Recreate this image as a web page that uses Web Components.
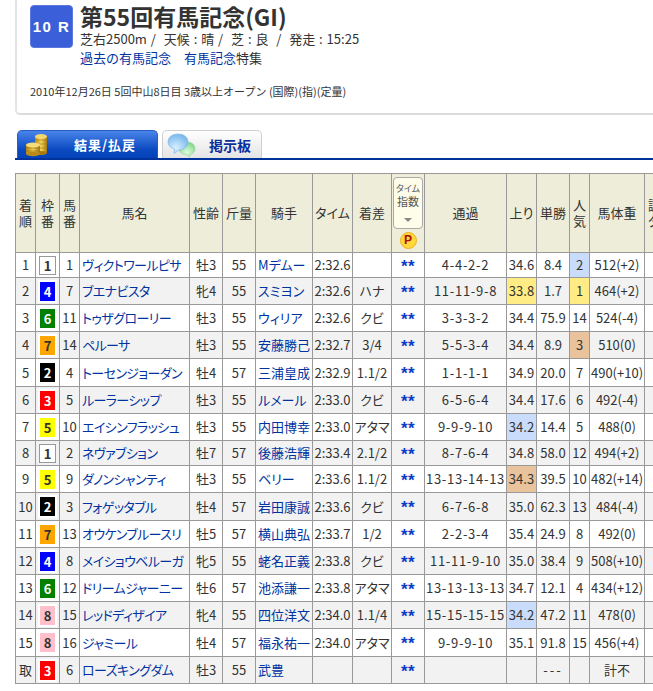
<!DOCTYPE html>
<html lang="ja">
<head>
<meta charset="utf-8">
<title>第55回有馬記念(GI)</title>
<style>
  html, body { margin: 0; overflow: hidden; background: #fff; }
  body { font-family: "Noto Sans CJK JP", "Liberation Sans", sans-serif; color: #333; width: 653px; height: 691px; }
  a { color: #00339f; text-decoration: none; }
</style>
</head>
<body>
<race-card>
  <span slot="number">10 R</span>
  <span slot="title">第55回有馬記念(GI)</span>
  <span slot="info">芝右2500m / &nbsp;天候 : 晴 / &nbsp;芝 : 良 &nbsp;/ &nbsp;発走 : 15:25</span>
  <span slot="links"><a href="#">過去の有馬記念</a>　<a href="#">有馬記念</a>特集</span>
  <span slot="meta">2010年12月26日 5回中山8日目 3歳以上オープン (国際)(指)(定量)</span>
</race-card>
<race-tabs></race-tabs>
<result-table></result-table>

<script>
const linkColor = "#00339f";

const cardTemplate = document.createElement("template");
cardTemplate.innerHTML = `
  <style>
    :host { display: block; margin-left: 15px; width: 638px; height: 115px; box-sizing: border-box;
      border-left: 2px solid #e4e4e4; border-bottom: 2px solid #dcdcdc; border-bottom-left-radius: 5px; padding: 5px 0 0 13px; }
    .top { display: flex; gap: 7px; }
    .num { width: 43px; height: 43px; box-sizing: border-box; background: #3b5fd9; border: 1px solid #5a78dd; border-radius: 4px;
      color: #fff; font: bold 15px/41px "Liberation Sans", sans-serif; letter-spacing: 1.5px; text-align: center; flex: none; }
    .title { font-size: 23px; font-weight: 700; line-height: 23px; color: #333; white-space: nowrap; }
    .info { font-size: 13px; line-height: 18px; margin-top: 2px; white-space: nowrap; word-spacing: 1px; }
    .links { font-size: 13px; line-height: 18px; margin-top: 1px; white-space: nowrap; }
    .meta { font-size: 11px; line-height: 14px; margin-top: 17px; white-space: nowrap; }
  </style>
  <div class="top">
    <div class="num"><slot name="number"></slot></div>
    <div>
      <div class="title"><slot name="title"></slot></div>
      <div class="info"><slot name="info"></slot></div>
      <div class="links"><slot name="links"></slot></div>
    </div>
  </div>
  <div class="meta"><slot name="meta"></slot></div>
`;

class RaceCard extends HTMLElement {
  constructor() {
    super();
    this.attachShadow({ mode: "open" });
    this.shadowRoot.appendChild(cardTemplate.content.cloneNode(true));
  }
}
customElements.define("race-card", RaceCard);

const tabsTemplate = document.createElement("template");
tabsTemplate.innerHTML = `
  <style>
    :host { display: block; margin: 15px 0 0 15px; height: 30px; box-sizing: border-box; border-bottom: 2px solid #003399; }
    .row { display: flex; gap: 4px; height: 28px; padding-left: 2px; }
    .tab { box-sizing: border-box; height: 28px; border-radius: 5px 5px 0 0; display: flex; align-items: center; font-size: 13px; font-weight: 700; position: relative; white-space: nowrap; }
    .on { width: 141px; background: linear-gradient(#4a84ea, #0a49c0 70%, #0342b8); border: 1px solid #2a5cc0; border-bottom: 0; color: #fff; padding-left: 56px; letter-spacing: 1px; }
    .off { width: 100px; background: linear-gradient(#fff, #e4e4e4); border: 1px solid #cfcfcf; border-bottom: 0; color: #0b2f9c; padding-left: 46px; font-size: 14px; }
    svg { position: absolute; }
  </style>
  <div class="row">
    <div class="tab on">
      <svg style="left:7px;top:2px" width="24" height="24" viewBox="0 0 24 24">
        <defs><linearGradient id="g" x1="0" x2="1"><stop offset="0" stop-color="#b8860f"/><stop offset=".5" stop-color="#f6d45a"/><stop offset="1" stop-color="#a87a10"/></linearGradient></defs>
        <rect x="10" y="3" width="12" height="17" fill="url(#g)"/>
        <path d="M10 7h12M10 11h12M10 15h12" stroke="#a67c14" stroke-width=".6"/>
        <ellipse cx="16" cy="3.500" rx="6" ry="2.500" fill="#f3d670"/>
        <ellipse cx="16" cy="20" rx="6" ry="2" fill="#a87a10"/>
        <rect x="1" y="12" width="14" height="9" fill="url(#g)"/>
        <path d="M1 15h14M1 18h14" stroke="#8f6a10" stroke-width=".7"/>
        <ellipse cx="8" cy="12" rx="7" ry="2.500" fill="#f6dc78"/>
        <ellipse cx="8" cy="21" rx="7" ry="2.200" fill="#b88a18"/>
      </svg>
      結果/払戻
    </div>
    <div class="tab off">
      <svg style="left:4px;top:2px" width="32" height="25" viewBox="0 0 32 25">
        <defs>
          <radialGradient id="b" cx=".4" cy=".7" r=".8"><stop offset="0" stop-color="#d8f0ff"/><stop offset="1" stop-color="#6ab0ea"/></radialGradient>
          <radialGradient id="c" cx=".5" cy=".7" r=".8"><stop offset="0" stop-color="#e0fbe0"/><stop offset="1" stop-color="#6fd07a"/></radialGradient>
        </defs>
        <path d="M20 9c5 0 8 3 8 6.500s-2.500 5.500-5 6l-.5 2.500-3.500-2.500c-4 0-7-2.500-7-6s3-6.500 8-6.500z" fill="url(#c)" stroke="#8ad494" stroke-width=".6"/>
        <path d="M11 1c6 0 10 3.500 10 8s-4 8-9 8l-5 3.500 .5-4.500C3.500 15 1 12.500 1 9c0-4.500 4-8 10-8z" fill="url(#b)" stroke="#7cb6e6" stroke-width=".6"/>
      </svg>
      掲示板
    </div>
  </div>
`;

class RaceTabs extends HTMLElement {
  constructor() {
    super();
    this.attachShadow({ mode: "open" });
    this.shadowRoot.appendChild(tabsTemplate.content.cloneNode(true));
  }
}
customElements.define("race-tabs", RaceTabs);

const wakuColors = {
  1: ["#fff", "#333"], 2: ["#000", "#fff"], 3: ["#f00", "#fff"], 4: ["#00f", "#fff"],
  5: ["#ff0", "#333"], 6: ["#008000", "#fff"], 7: ["#ffa500", "#333"], 8: ["#ffc0cb", "#333"],
};

class WakuBadge extends HTMLElement {
  constructor() {
    super();
    this.attachShadow({ mode: "open" });
    const n = this.getAttribute("n");
    const [bg, fg] = wakuColors[n];
    const edge = n === "1" ? "border: 1px solid #999; width: 15px; height: 17px; line-height: 17px;" : "";
    this.shadowRoot.innerHTML = `
      <style>
        :host { display: inline-block; vertical-align: middle; padding: 2px; background: ${n === "1" ? "transparent" : "#fff"}; line-height: 0; }
        div { width: 15px; height: 19px; line-height: 19px; background: ${bg}; color: ${fg}; font-size: 13px; font-weight: 700; text-align: center; ${edge} }
      </style>
      <div>${n}</div>`;
  }
}
customElements.define("waku-badge", WakuBadge);

const widths = [20, 24, 20, 110, 33, 33, 57, 40, 39, 33, 82, 30, 33, 20, 55, 10];
const heads = ["着<br>順", "枠<br>番", "馬<br>番", "馬名", "性齢", "斤量", "騎手", "タイム", "着差", "", "通過", "上り", "単勝", "人<br>気", "馬体重", "調教<br>タイム"];
const hi = { blue: "#c9dcfc", yellow: "#ffec84", orange: "#e9c39b" };

// 着順 枠 馬番 馬名 性齢 斤量 騎手 タイム 着差 通過 上り 単勝 人気 馬体重 行高
const rows = [
  ["1", 1, 1, "ヴィクトワールピサ", "牡3", 55, "Mデムー", "2:32.6", "", "4-4-2-2", "34.6", "8.4", "2", "512(+2)", 25, {pop: "blue"}],
  ["2", 4, 7, "ブエナビスタ", "牝4", 55, "スミヨン", "2:32.6", "ハナ", "11-11-9-8", "33.8", "1.7", "1", "464(+2)", 27, {up: "yellow", pop: "yellow"}],
  ["3", 6, 11, "トゥザグローリー", "牡3", 55, "ウィリア", "2:32.6", "クビ", "3-3-3-2", "34.4", "75.9", "14", "524(-4)", 27],
  ["4", 7, 14, "ペルーサ", "牡3", 55, "安藤勝己", "2:32.7", "3/4", "5-5-3-4", "34.4", "8.9", "3", "510(0)", 27, {pop: "orange"}],
  ["5", 2, 4, "トーセンジョーダン", "牡4", 57, "三浦皇成", "2:32.9", "1.1/2", "1-1-1-1", "34.9", "20.0", "7", "490(+10)", 28],
  ["6", 3, 5, "ルーラーシップ", "牡3", 55, "ルメール", "2:33.0", "クビ", "6-5-6-4", "34.4", "17.6", "6", "492(-4)", 27],
  ["7", 5, 10, "エイシンフラッシュ", "牡3", 55, "内田博幸", "2:33.0", "アタマ", "9-9-9-10", "34.2", "14.4", "5", "488(0)", 27, {up: "blue"}],
  ["8", 1, 2, "ネヴァブション", "牡7", 57, "後藤浩輝", "2:33.4", "2.1/2", "8-7-6-4", "34.8", "58.0", "12", "494(+2)", 25],
  ["9", 5, 9, "ダノンシャンティ", "牡3", 55, "ベリー", "2:33.6", "1.1/2", "13-13-14-13", "34.3", "39.5", "10", "482(+14)", 27, {up: "orange"}],
  ["10", 2, 3, "フォゲッタブル", "牡4", 57, "岩田康誠", "2:33.6", "クビ", "6-7-6-8", "35.0", "62.3", "13", "484(-4)", 28],
  ["11", 7, 13, "オウケンブルースリ", "牡5", 57, "横山典弘", "2:33.7", "1/2", "2-2-3-4", "35.4", "24.9", "8", "492(0)", 27],
  ["12", 4, 8, "メイショウベルーガ", "牝5", 55, "蛯名正義", "2:33.8", "クビ", "11-11-9-10", "35.0", "38.4", "9", "508(+10)", 27],
  ["13", 6, 12, "ドリームジャーニー", "牡6", 57, "池添謙一", "2:33.8", "アタマ", "13-13-13-13", "34.7", "12.1", "4", "434(+12)", 27],
  ["14", 8, 15, "レッドディザイア", "牝4", 55, "四位洋文", "2:34.0", "1.1/4", "15-15-15-15", "34.2", "47.2", "11", "478(0)", 27, {up: "blue"}],
  ["15", 8, 16, "ジャミール", "牡4", 57, "福永祐一", "2:34.0", "アタマ", "9-9-9-10", "35.1", "91.8", "15", "456(+4)", 28],
  ["取", 3, 6, "ローズキングダム", "牡3", 55, "武豊", "", "", "", "", "---", "", "計不", 27],
];

const tableStyle = `
  <style>
    :host { display: block; margin: 13px 0 0 15px; width: 638px; }
    table { border-collapse: collapse; table-layout: fixed; width: 639px; font-size: 13px; color: #333; }
    th, td { border: 1px solid #999; padding: 0; text-align: center; white-space: nowrap; overflow: hidden; }
    th { background: #eeedda; font-weight: 400; line-height: 16px; height: 78px; font-feature-settings: "palt"; }
    td { line-height: 16px; font-feature-settings: "palt"; }
    tr:nth-child(even) td { background: #f2f2f2; }
    td.name, td.jockey { text-align: left; padding-left: 2px; }
    td.name a { letter-spacing: -0.6px; }
    td.pass { letter-spacing: 0.7px; }
    td.none { letter-spacing: 2px; }
    a { color: ${linkColor}; text-decoration: none; }
    td.stars { color: #0a3cc8; font: bold 17px/16px "Liberation Sans", sans-serif; letter-spacing: 0.5px; padding-top: 3px; }
    td.blue { background: ${hi.blue} !important; }
    td.yellow { background: ${hi.yellow} !important; }
    td.orange { background: ${hi.orange} !important; }
    th.idx { vertical-align: top; padding-top: 3px; height: 75px; }
    th.cut { text-align: left; padding-left: 3px; }
    .box { box-sizing: border-box; width: 30px; height: 52px; margin: 0 auto; background: #fdfdea; border: 1px solid #aaa; border-radius: 4px; color: #555; position: relative; }
    .box span { display: block; font-size: 11px; line-height: 13px; }
    .box .sm { font-size: 9px; margin-top: 4px; }
    .box i { position: absolute; left: 10px; bottom: 6px; border: 4px solid transparent; border-top: 4px solid #888; border-bottom: 0; width: 0; height: 0; }
    .p { width: 15px; height: 15px; margin: 3px auto 0; border-radius: 50%; background: #ffd83a; border: 1px solid #eeb020; color: #a80f0f; font: bold 12px/15px "Liberation Sans", sans-serif; }
  </style>`;

class ResultTable extends HTMLElement {
  constructor() {
    super();
    this.attachShadow({ mode: "open" });
    const cols = widths.map(w => `<col style="width:${w}px">`).join("");
    const head = heads.map((h, i) => {
      if (i === 9) return `<th class="idx"><div class="box"><span class="sm">タイム</span><span>指数</span><i></i></div><div class="p">P</div></th>`;
      if (i === 15) return `<th class="cut">${h}</th>`;
      return `<th>${h}</th>`;
    }).join("");
    const body = rows.map(r => {
      const mark = r[15] || {};
      return `<tr style="height:${r[14]}px">
        <td>${r[0]}</td>
        <td><waku-badge n="${r[1]}"></waku-badge></td>
        <td>${r[2]}</td>
        <td class="name"><a href="#">${r[3]}</a></td>
        <td>${r[4]}</td>
        <td>${r[5]}</td>
        <td class="jockey"><a href="#">${r[6]}</a></td>
        <td>${r[7]}</td>
        <td>${r[8]}</td>
        <td class="stars">**</td>
        <td class="pass">${r[9]}</td>
        <td class="${mark.up || ""}">${r[10]}</td>
        <td class="${r[11] === "---" ? "none" : ""}">${r[11]}</td>
        <td class="${mark.pop || ""}">${r[12]}</td>
        <td>${r[13]}</td>
        <td></td>
      </tr>`;
    }).join("");
    this.shadowRoot.innerHTML = `${tableStyle}<table><colgroup>${cols}</colgroup><thead><tr>${head}</tr></thead><tbody>${body}</tbody></table>`;
  }
}
customElements.define("result-table", ResultTable);
</script>
</body>
</html>
